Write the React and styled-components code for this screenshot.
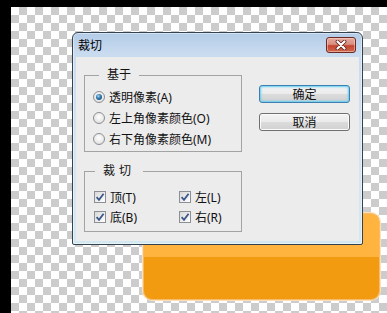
import React from 'react';
import styled, { createGlobalStyle } from 'styled-components';

const Global = createGlobalStyle`
  html, body { margin: 0; padding: 0; background: #000; }
  * { box-sizing: border-box; }
`;

const Page = styled.div`
  width: 387px;
  height: 313px;
  background: #000;
  padding: 7px 0 0 11px;
  display: flex;
  font-family: "Noto Sans", "Noto Sans CJK SC", sans-serif;
  font-size: 12px;
  color: #111;
`;

// transparent canvas, Photoshop style
const Canvas = styled.div`
  position: relative;
  flex: 1;
  overflow: hidden;
  background: repeating-conic-gradient(#cccccc 0 25%, #ffffff 0 50%) 0 0 / 16px 16px;
`;

const OrangeBar = styled.div`
  position: absolute;
  left: 132px;
  top: 206px;
  width: 237px;
  height: 87px;
  border-radius: 9px;
  border: 1px solid #f7bb6e;
  box-shadow: 0 0 0 1px #fde0b6;
  background: linear-gradient(#feb43f 0 51%, #f29b10 51% 100%);
`;

const Window = styled.div`
  position: absolute;
  left: 61px;
  top: 25px;
  width: 291px;
  height: 213px;
  border: 1px solid #34414f;
  border-radius: 6px 6px 2px 2px;
  padding: 0 3px 3px;
  display: flex;
  flex-direction: column;
  background: linear-gradient(#b4cce8 0%, #c9dbef 10%, #d6e3f2 50%, #d3e9f1 100%);
  box-shadow: inset 0 0 0 1px rgba(255,255,255,0.45);
`;

const TitleBar = styled.div`
  height: 24px;
  display: flex;
  align-items: center;
  justify-content: space-between;
  padding: 0 3px 0 2px;
`;

const Title = styled.span`
  font-size: 12px;
  color: #000;
`;

const CloseBtn = styled.div`
  width: 30px;
  height: 16px;
  border: 1px solid #6b2a22;
  border-radius: 3px;
  display: flex;
  align-items: center;
  justify-content: center;
  background: linear-gradient(#e6a99e 0%, #d88f82 45%, #c4452f 55%, #cf6a4f 100%);
  box-shadow: inset 0 0 0 1px rgba(255,220,210,0.5);
`;

const Body = styled.div`
  flex: 1;
  background: #ececec;
  display: flex;
  padding: 11px 0 0 8px;
  gap: 17px;
`;

const Left = styled.div`
  width: 158px;
  display: flex;
  flex-direction: column;
`;

const Group = styled.fieldset`
  margin: ${p => (p.$second ? '12px 0 0' : '0')};
  padding: 0;
  width: 158px;
  border: 1px solid #a3a3a3;
  min-width: 0;
`;

const Legend = styled.legend`
  margin-left: ${p => p.$indent}px;
  padding: 0 8px;
  line-height: 14px;
  font-size: 12px;
  letter-spacing: ${p => p.$spacing || 0}px;
`;

const RadioList = styled.div`
  padding: 4px 0 2px 8px;
`;

const Option = styled.div`
  height: 21px;
  display: flex;
  align-items: center;
  gap: 4px;
  white-space: nowrap;
`;

const Radio = styled.span`
  width: 12px;
  height: 12px;
  border-radius: 50%;
  border: 1px solid #8c8f94;
  background: radial-gradient(circle at 50% 40%, #ffffff 0%, #e8e8e8 60%, #cfcfcf 100%);
  display: flex;
  align-items: center;
  justify-content: center;
  &::after {
    content: '';
    width: 6px;
    height: 6px;
    border-radius: 50%;
    display: ${p => (p.$on ? 'block' : 'none')};
    background: radial-gradient(circle at 40% 35%, #a9d8f6 0%, #2f76a9 45%, #123f63 100%);
  }
`;

const CheckGrid = styled.div`
  display: grid;
  grid-template-columns: 85px 1fr;
  grid-auto-rows: 20px;
  padding: 9px 0 4px 9px;
`;

const CheckRow = styled.div`
  display: flex;
  align-items: center;
  gap: 4px;
`;

const Box = styled.span`
  width: 12px;
  height: 12px;
  border: 1px solid #8c8f94;
  background: linear-gradient(135deg, #d8d8d8, #ffffff);
  display: flex;
  align-items: center;
  justify-content: center;
`;

const Buttons = styled.div`
  margin-top: 17px;
  display: flex;
  flex-direction: column;
  gap: 10px;
`;

const Button = styled.div`
  width: 91px;
  height: 18px;
  border-radius: 3px;
  border: 1px solid ${p => (p.$default ? '#3c7fb1' : '#707070')};
  display: flex;
  align-items: center;
  justify-content: center;
  font-size: 12px;
  background: linear-gradient(#f3f3f3 0%, #ebebeb 48%, #dcdcdc 52%, #d0d0d0 100%);
  box-shadow: ${p => (p.$default ? 'inset 0 0 2px 1px #62cdf3' : 'inset 0 0 0 1px #fbfbfb')};
`;

const Check = () => (
  <svg width="10" height="10" viewBox="0 0 10 10">
    <path d="M1.6 5.2 L4 7.8 L8.6 1.8" fill="none" stroke="#3b5889" strokeWidth="1.8" />
  </svg>
);

const CloseIcon = () => (
  <svg width="12" height="10" viewBox="0 0 12 10">
    <path d="M2.5 1.5 L9.5 8.5 M9.5 1.5 L2.5 8.5" stroke="#5b2119" strokeWidth="3.8" strokeLinecap="round" />
    <path d="M2.5 1.5 L9.5 8.5 M9.5 1.5 L2.5 8.5" stroke="#ffffff" strokeWidth="2.2" strokeLinecap="round" />
  </svg>
);

const radios = [
  { label: '透明像素(A)', on: true },
  { label: '左上角像素颜色(O)' },
  { label: '右下角像素颜色(M)' },
];

const checks = ['顶(T)', '左(L)', '底(B)', '右(R)'];

export default function App() {
  return (
    <Page>
      <Global />
      <Canvas>
        <OrangeBar />
        <Window>
          <TitleBar>
            <Title>裁切</Title>
            <CloseBtn><CloseIcon /></CloseBtn>
          </TitleBar>
          <Body>
            <Left>
              <Group>
                <Legend $indent={14}>基于</Legend>
                <RadioList>
                  {radios.map(r => (
                    <Option key={r.label}>
                      <Radio $on={r.on} />
                      {r.label}
                    </Option>
                  ))}
                </RadioList>
              </Group>
              <Group $second>
                <Legend $indent={10} $spacing={4}>裁切</Legend>
                <CheckGrid>
                  {checks.map(c => (
                    <CheckRow key={c}>
                      <Box><Check /></Box>
                      {c}
                    </CheckRow>
                  ))}
                </CheckGrid>
              </Group>
            </Left>
            <Buttons>
              <Button $default>确定</Button>
              <Button>取消</Button>
            </Buttons>
          </Body>
        </Window>
      </Canvas>
    </Page>
  );
}
